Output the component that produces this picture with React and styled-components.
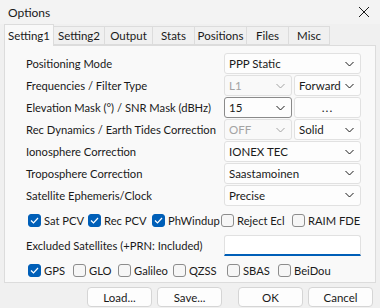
import React from 'react'
import styled, { createGlobalStyle } from 'styled-components'

const GlobalStyle = createGlobalStyle`
  html, body { margin: 0; padding: 0; background: #f0f0f0; }
  body { font-family: Lato, "Noto Sans", "Liberation Sans", sans-serif; font-size: 11px; color: #1a1a1a; }
`

const Window = styled.div`
  width: 380px;
  height: 308px;
  background: #f0f0f0;
  display: flex;
  flex-direction: column;
  overflow: hidden;
`

const TitleBar = styled.div`
  height: 24px;
  display: flex;
  align-items: center;
  justify-content: space-between;
  padding: 0 8px 0 8px;
  font-size: 12px;
  background: #f3f3f3;
`

const Close = styled.svg`
  width: 12px;
  height: 12px;
  margin-right: 2px;
`

const TabStrip = styled.div`
  display: flex;
  align-items: flex-end;
  height: 21px;
  padding-left: 4px;
  position: relative;
  z-index: 1;
`

const Tab = styled.div`
  height: ${p => (p.$active ? '22px' : '19px')};
  width: ${p => p.$w}px;
  margin-bottom: ${p => (p.$active ? '-1px' : '0')};
  box-sizing: border-box;
  display: flex;
  align-items: center;
  justify-content: center;
  background: ${p => (p.$active ? '#f9f9f9' : '#f0f0f0')};
  border: 1px solid #dcdcdc;
  border-bottom: ${p => (p.$active ? 'none' : '1px solid #dcdcdc')};
  border-left: ${p => (p.$first || p.$active ? '1px solid #dcdcdc' : 'none')};
  font-size: 11.5px;
`

const Panel = styled.div`
  margin: 0 4px;
  height: 238px;
  box-sizing: border-box;
  background: #f9f9f9;
  border: 1px solid #dcdcdc;
  padding: 7px 14px 0 21px;
  display: flex;
  flex-direction: column;
`

const Row = styled.div`
  display: grid;
  grid-template-columns: 198px 137px;
  align-items: center;
  height: ${p => p.$h || 22}px;
`

const Label = styled.span`
  font-size: 11.2px;
  white-space: nowrap;
`

const Pair = styled.div`
  display: grid;
  grid-template-columns: 68px 67px;
  gap: 2px;
`

const ComboBox = styled.div`
  height: 21px;
  box-sizing: border-box;
  border: 1px solid ${p => (p.$focus ? '#8a8a8a' : '#e1e1e1')};
  border-radius: 3px;
  background: ${p => (p.$disabled ? '#f9f9f9' : '#fdfdfd')};
  color: ${p => (p.$disabled ? '#a3a3a3' : '#1a1a1a')};
  display: flex;
  align-items: center;
  justify-content: space-between;
  padding: 0 6px 0 4px;
  font-size: 11.5px;
`

const Chevron = styled.svg`
  width: 9px;
  height: 6px;
  flex-shrink: 0;
`

const PushButton = styled.div`
  height: 21px;
  box-sizing: border-box;
  border: 1px solid #e1e1e1;
  border-radius: 3px;
  background: #fdfdfd;
  display: flex;
  align-items: center;
  justify-content: center;
  font-size: 12px;
  letter-spacing: 1px;
`

const CheckRow = styled.div`
  display: flex;
  align-items: center;
  height: 24px;
  margin-top: ${p => p.$top || 0}px;
`

const Check = styled.label`
  display: flex;
  align-items: center;
  gap: 3px;
  width: ${p => p.$w}px;
  flex-shrink: 0;
  font-size: 11.2px;
  white-space: nowrap;
`

const Box = styled.span`
  width: 13px;
  height: 13px;
  flex-shrink: 0;
  box-sizing: border-box;
  border-radius: 3px;
  display: inline-flex;
  align-items: center;
  justify-content: center;
  background: ${p => (p.$on ? '#005fb8' : '#f6f6f6')};
  border: 1px solid ${p => (p.$on ? '#005fb8' : '#8c8c8c')};
  margin-left: 2px;
`

const TextInput = styled.div`
  height: 21px;
  box-sizing: border-box;
  background: #ffffff;
  border: 1px solid #e1e1e1;
  border-bottom: 2px solid #005fb8;
  border-radius: 3px 3px 0 0;
`

const Footer = styled.div`
  display: flex;
  justify-content: flex-end;
  align-items: center;
  padding: 4px 7px 0 0;
  gap: 5px;
`

const FooterButton = styled.div`
  width: 65px;
  height: 20px;
  box-sizing: border-box;
  border: 1px solid #d5d5d5;
  border-radius: 4px;
  background: #fdfdfd;
  display: flex;
  align-items: center;
  justify-content: center;
  font-size: 11.5px;
  margin-left: ${p => p.$space || 0}px;
`

const Down = () => (
  <Chevron viewBox="0 0 9 6">
    <path d="M0.5 1 L4.5 5 L8.5 1" fill="none" stroke="currentColor" strokeWidth="1" />
  </Chevron>
)

const Combo = ({ value, disabled, focus }) => (
  <ComboBox $disabled={disabled} $focus={focus}>
    <span>{value}</span>
    <Down />
  </ComboBox>
)

const CheckItem = ({ on, label, w }) => (
  <Check $w={w}>
    <Box $on={on}>
      {on && (
        <svg width="9" height="7" viewBox="0 0 9 7">
          <path d="M1 3.5 L3.5 6 L8 1" fill="none" stroke="#fff" strokeWidth="1.2" />
        </svg>
      )}
    </Box>
    {label}
  </Check>
)

const tabs = [
  ['Setting1', 50],
  ['Setting2', 51],
  ['Output', 48],
  ['Stats', 42],
  ['Positions', 52],
  ['Files', 42],
  ['Misc', 41],
]

export default function App() {
  return (
    <>
      <GlobalStyle />
      <Window>
        <TitleBar>
          <span>Options</span>
          <Close viewBox="0 0 12 12">
            <path d="M1 1 L11 11 M11 1 L1 11" stroke="#1a1a1a" strokeWidth="1" />
          </Close>
        </TitleBar>
        <TabStrip>
          {tabs.map(([t, w], i) => (
            <Tab key={t} $w={w} $active={i === 0} $first={i === 0}>{t}</Tab>
          ))}
        </TabStrip>
        <Panel>
          <Row>
            <Label>Positioning Mode</Label>
            <Combo value="PPP Static" />
          </Row>
          <Row>
            <Label>Frequencies / Filter Type</Label>
            <Pair>
              <Combo value="L1" disabled />
              <Combo value="Forward" />
            </Pair>
          </Row>
          <Row>
            <Label>Elevation Mask (°) / SNR Mask (dBHz)</Label>
            <Pair>
              <Combo value="15" focus />
              <PushButton>...</PushButton>
            </Pair>
          </Row>
          <Row>
            <Label>Rec Dynamics / Earth Tides Correction</Label>
            <Pair>
              <Combo value="OFF" disabled />
              <Combo value="Solid" />
            </Pair>
          </Row>
          <Row>
            <Label>Ionosphere Correction</Label>
            <Combo value="IONEX TEC" />
          </Row>
          <Row>
            <Label>Troposphere Correction</Label>
            <Combo value="Saastamoinen" />
          </Row>
          <Row>
            <Label>Satellite Ephemeris/Clock</Label>
            <Combo value="Precise" />
          </Row>
          <CheckRow $top={2}>
            <CheckItem on label="Sat PCV" w={60} />
            <CheckItem on label="Rec PCV" w={64} />
            <CheckItem on label="PhWindup" w={69} />
            <CheckItem label="Reject Ecl" w={71} />
            <CheckItem label="RAIM FDE" w={66} />
          </CheckRow>
          <Row $h={26}>
            <Label>Excluded Satellites (+PRN: Included)</Label>
            <TextInput />
          </Row>
          <CheckRow>
            <CheckItem on label="GPS" w={45} />
            <CheckItem label="GLO" w={45} />
            <CheckItem label="Galileo" w={55} />
            <CheckItem label="QZSS" w={54} />
            <CheckItem label="SBAS" w={51} />
            <CheckItem label="BeiDou" w={55} />
          </CheckRow>
        </Panel>
        <Footer>
          <FooterButton>Load...</FooterButton>
          <FooterButton>Save...</FooterButton>
          <FooterButton $space={11}>OK</FooterButton>
          <FooterButton>Cancel</FooterButton>
        </Footer>
      </Window>
    </>
  )
}
